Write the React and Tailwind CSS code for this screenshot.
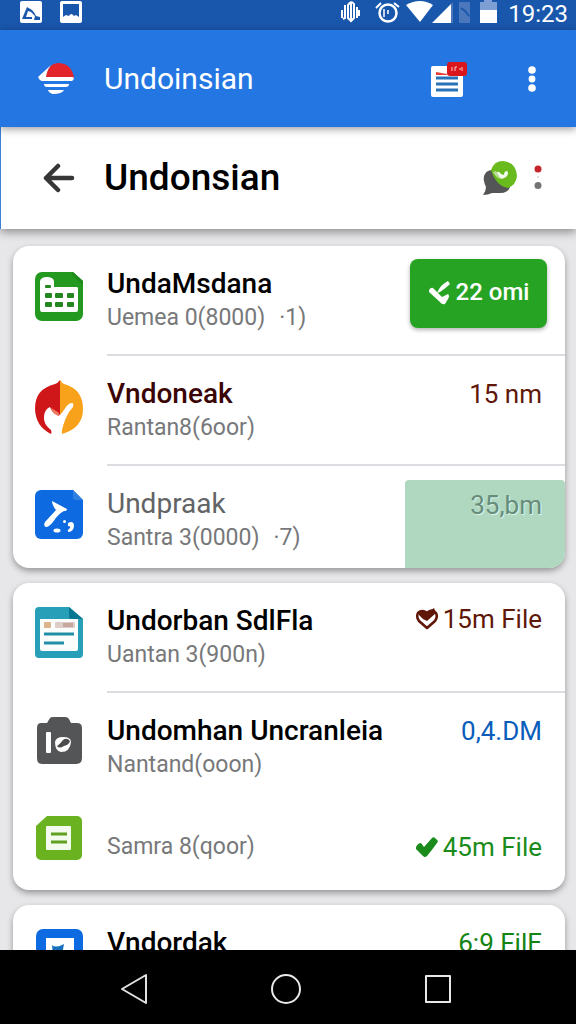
import React from 'react';

const icons = {
  building: (
    <svg viewBox="0 0 48 49" className="h-[49px] w-12" aria-hidden="true">
      <path d="M7 0H38L48 9V42a7 7 0 0 1-7 7H7a7 7 0 0 1-7-7V7a7 7 0 0 1 7-7Z" fill="#24991f" />
      <path d="M38 0L48 9V13L36 2Z" fill="#1d8a1b" />
      <path d="M5 37V9Q6 5 12 5Q18 5 19 9V15H42Q43 15 43 17V38Q43 40 41 40H7Q5 40 5 37Z" fill="#fff" />
      <g fill="#24861f">
        <rect x="10" y="13" width="6" height="3" rx="1" />
        <rect x="10" y="21" width="7" height="5" rx="1" />
        <rect x="20" y="21" width="8" height="5" rx="1" />
        <rect x="32" y="21" width="7" height="5" rx="1" />
        <rect x="10" y="30" width="7" height="5" rx="1" />
        <rect x="20" y="30" width="8" height="5" rx="1" />
        <rect x="32" y="30" width="7" height="5" rx="1" />
      </g>
    </svg>
  ),
  flame: (
    <svg viewBox="0 0 48 54" className="h-[54px] w-12" aria-hidden="true">
      <path d="M25 0V34L16 54Q0 46 0 28Q0 9 20 4Q23 3 25 0Z" fill="#cf1719" />
      <path d="M25 0Q27 3 29 4Q48 9 48 29Q48 48 27 54L25 34Z" fill="#f8a21b" />
      <path d="M16 50Q8 44 9 36Q10 29 15 27Q17 33 24 36Q28 32 31 27Q34 23 37 23Q39 23 38 27Q30 35 26 54L17 54Z" fill="#fff" />
      <path d="M16 28Q20 30 24 33V36Q17 34 16 28Z" fill="#ed7960" />
    </svg>
  ),
  blueDoc: (
    <svg viewBox="0 0 48 49" className="h-[49px] w-12" aria-hidden="true">
      <path d="M6 0H38L48 10V43a6 6 0 0 1-6 6H6a6 6 0 0 1-6-6V6a6 6 0 0 1 6-6Z" fill="#0e6ae0" />
      <path d="M38 0L48 10H40Q38 10 38 8Z" fill="#3180df" />
      <path d="M17 11L32 19Q32 21 29 21Q23 24 18 32Q14 37 11 37Q8 36 10 32L21 20Q17 15 17 11Z" fill="#fff" />
      <ellipse cx="22" cy="40.5" rx="3.5" ry="2" fill="#fff" />
      <circle cx="29.5" cy="31.5" r="1.5" fill="#fff" />
      <path d="M33 33Q38 30 39 35Q39 41 34 42Q31 41 35 38Q36 36 33 36Z" fill="#fff" />
    </svg>
  ),
  tealDoc: (
    <svg viewBox="0 0 48 51" className="h-[51px] w-12" aria-hidden="true">
      <path d="M4 0H34L48 12V47a4 4 0 0 1-4 4H4a4 4 0 0 1-4-4V4a4 4 0 0 1 4-4Z" fill="#289fb8" />
      <path d="M34 0L48 12H36Q34 12 34 10Z" fill="#087791" />
      <path d="M5 12H43V42Q43 44 41 44H7Q5 44 5 42Z" fill="#fbfdfc" />
      <rect x="9" y="15" width="7" height="6" rx="1" fill="#dcb48c" />
      <rect x="20" y="15" width="20" height="6" rx="1" fill="#dccdc8" />
      <path d="M28 16H38V20H28Z" fill="#c6a79e" />
      <path d="M9 27H39M9 36H29" stroke="#238fa6" strokeWidth="3" />
    </svg>
  ),
  camera: (
    <svg viewBox="0 0 48 49" className="h-[49px] w-12" aria-hidden="true">
      <path d="M6 8H12L15 3Q16 2 18 2H30Q33 2 34 4L36 8H42Q47 8 47 13V43Q47 49 41 49H7Q2 49 2 43V13Q2 8 6 8Z" fill="#545557" />
      <rect x="11" y="17" width="5" height="21" rx="1" fill="#fff" />
      <path d="M20 27Q21 22 28 22Q36 22 36 27Q35 37 26 37Q20 36 20 27Z" fill="#fff" />
      <path d="M22 31Q24 30 28 25Q32 22 35 26Q34 30 29 31Q24 34 22 31Z" fill="#4b4b4d" />
    </svg>
  ),
  note: (
    <svg viewBox="0 0 48 46" className="h-[46px] w-12" aria-hidden="true">
      <path d="M12 1H42a5 5 0 0 1 5 5V40a5 5 0 0 1-5 5H6a5 5 0 0 1-5-5V11Z" fill="#6ab220" />
      <rect x="11" y="11" width="25" height="24" rx="1" fill="#f4faee" />
      <path d="M16 19H32M16 27H32" stroke="#5fa01e" strokeWidth="3" />
    </svg>
  ),
  frame: (
    <svg viewBox="0 0 48 49" className="h-[49px] w-12" aria-hidden="true">
      <rect x="1" width="47" height="49" rx="7" fill="#0e6ae0" />
      <rect x="11" y="9" width="28" height="30" fill="#fff" />
      <path d="M17 16Q20 19 27 16L29 15L27 26H18Z" fill="#1670bd" />
    </svg>
  ),
};

function Check() {
  return (
    <svg viewBox="0 0 24 22" className="h-[22px] w-6" fill="currentColor" aria-hidden="true">
      <path d="M1 11Q3 7 6 7L9 11L17 2Q19 0 21 3Q24 5 22 7Q17 14 12 20Q10 22 8 20L1 13Z" />
    </svg>
  );
}

function Heart() {
  return (
    <svg viewBox="0 0 24 24" className="h-6 w-6" aria-hidden="true">
      <path
        d="M12 21L4 14Q1 10 3 6Q7 2 12 6Q17 1 21 6Q23 10 20 14Z"
        fill="none"
        stroke="#5f1708"
        strokeWidth="2.6"
        strokeLinejoin="round"
      />
      <path d="M4 5Q8 2 12 6L19 1L21 6L12 14Q7 12 4 8Z" fill="#5f1708" />
    </svg>
  );
}

function Row({ icon, iconClass = 'pt-6', title, titleClass = 'font-medium text-black', sub, extra, line, bodyClass = 'pt-5 pb-5', children }) {
  return (
    <li className="flex gap-6 pl-[22px]">
      <div className={`shrink-0 ${iconClass}`}>{icons[icon]}</div>
      <div className={`flex min-w-0 flex-1 justify-between ${line ? 'border-b-2 border-[#dcdde0]' : ''}`}>
        <div className={`whitespace-nowrap ${bodyClass}`}>
          {title && <h2 className={`text-[28px] leading-9 ${titleClass}`}>{title}</h2>}
          {sub && (
            <p className="flex gap-[14px] text-[23px] leading-8 text-[#77787a]">
              <span>{sub}</span>
              {extra && <span>{extra}</span>}
            </p>
          )}
        </div>
        {children}
      </div>
    </li>
  );
}

function Value({ className, children }) {
  return (
    <div className={`flex h-9 items-center gap-1 whitespace-nowrap pr-[23px] text-[26px] ${className}`}>
      {children}
    </div>
  );
}

function Card({ children }) {
  return (
    <ul className="shrink-0 overflow-hidden rounded-2xl bg-white shadow-[0_3px_6px_rgba(0,0,0,0.35)]">
      {children}
    </ul>
  );
}

function StatusBar() {
  return (
    <div className="flex h-[30px] shrink-0 items-start justify-between bg-[#1957ad] pl-5 pr-2 text-white">
      <div className="flex gap-[18px] pt-px">
        <svg viewBox="0 0 22 22" className="h-[22px] w-[22px]" aria-hidden="true">
          <rect width="22" height="22" rx="2" fill="#fff" />
          <path d="M2 18L7 6L12 9Q15 12 16 15L20 16V19H14L15 15L11 11L8 10L6 16H12V18Z" fill="#1957ad" />
        </svg>
        <svg viewBox="0 0 22 22" className="h-[22px] w-[22px]" aria-hidden="true">
          <rect width="22" height="22" rx="2" fill="#fff" />
          <path d="M3 3H19V16L16 14L14 15Q11 11 9 15L6 14L3 16Z" fill="#1957ad" />
        </svg>
      </div>
      <div className="flex items-start gap-[10px]">
        <svg viewBox="0 0 20 24" className="mr-1 h-6 w-5" fill="none" stroke="#fff" strokeWidth="2" aria-hidden="true">
          <path d="M2 10V18M5 5V18L3 19M8 18V5Q11 0 14 4V18L11 21ZM11 3V20M17 7V18M19 10V16" />
        </svg>
        <svg viewBox="0 0 26 24" className="h-6 w-[26px]" fill="none" stroke="#fff" strokeWidth="2.5" aria-hidden="true">
          <circle cx="14" cy="13" r="8.5" />
          <path d="M2 8L7 3M20 3L25 7" strokeWidth="2" />
          <path d="M10 9V17M14 10V14" strokeWidth="1.5" />
        </svg>
        <svg viewBox="0 0 92 24" className="-ml-1 h-6 w-[92px]" aria-hidden="true">
          <path d="M0 5Q14-3 27 5L14 22Z" fill="#fff" />
          <path d="M26 23L45 4V23Z" fill="#fff" />
          <path d="M45 4L47 2V23H45ZM53 2H64V23H53Z" fill="#4b78bd" />
          <path d="M55 8L59 11L63 16" stroke="#1957ad" strokeWidth="2" fill="none" />
          <path d="M74 2H78V0H86V2H91V10H74Z" fill="#7e9fd3" />
          <path d="M74 10H91V23H74Z" fill="#fff" />
        </svg>
        <span className="text-2xl leading-7">19:23</span>
      </div>
    </div>
  );
}

export default function App() {
  return (
    <div className="flex h-screen flex-col overflow-hidden bg-[#e7e7e9] font-['Roboto',sans-serif]">
      <StatusBar />
      <header className="relative z-20 flex h-[97px] shrink-0 items-center bg-[#2477e2] pl-[37px] pr-[39px] text-white shadow-[0_2px_8px_rgba(0,0,0,0.4)]">
        <svg viewBox="0 0 38 34" className="h-[34px] w-[38px]" aria-hidden="true">
          <path d="M8 16Q11 1 22 1Q35 2 37 16Z" fill="#e3252b" />
          <path d="M1 15L14 3Q10 8 9 15H36Q38 17 35 19H5Q2 18 1 15Z" fill="#fff" />
          <path d="M7 22H32Q32 25 29 25H10Q7 25 7 22ZM11 28H27Q25 32 16 32Q12 31 11 28Z" fill="#fff" />
        </svg>
        <p className="ml-[29px] flex-1 text-[30px] leading-10">Undoinsian</p>
        <button type="button" aria-label="News" className="mr-[60px]">
          <svg viewBox="0 0 36 36" className="h-9 w-9" aria-hidden="true">
            <rect y="5" width="32" height="31" rx="2" fill="#fff" />
            <path d="M5 17H27M5 23H27M5 29H27" stroke="#2873b8" strokeWidth="3" />
            <path d="M5 11L16 13V14H5Z" fill="#e4402f" />
            <rect x="16" y="1" width="20" height="14" rx="3" fill="#d9161c" />
            <path d="M21 6V10M24 6V10M24 6H26M28 8H30M31 6V10" stroke="#ffc9c9" strokeWidth="1" fill="none" />
          </svg>
        </button>
        <button type="button" aria-label="More options">
          <svg viewBox="0 0 10 28" className="h-7 w-[10px]" fill="#fff" aria-hidden="true">
            <circle cx="5" cy="5" r="3.8" />
            <circle cx="5" cy="14" r="3.4" />
            <circle cx="5" cy="23" r="3.8" />
          </svg>
        </button>
      </header>
      <div className="relative z-10 flex h-[102px] shrink-0 items-center border-l border-[#3b82d6] bg-white pl-[42px] pr-[33px] shadow-[0_3px_9px_rgba(0,0,0,0.4)]">
        <button type="button" aria-label="Back">
          <svg viewBox="0 0 32 30" className="h-[30px] w-8" fill="none" stroke="#363636" strokeWidth="4.5" strokeLinecap="round" strokeLinejoin="round" aria-hidden="true">
            <path d="M29 15H3M15 3L3 15L15 27" />
          </svg>
        </button>
        <h1 className="ml-[29px] flex-1 text-[37px] font-medium leading-[44px] text-black">Undonsian</h1>
        <button type="button" aria-label="Chat" className="mr-4">
          <svg viewBox="0 0 34 36" className="h-9 w-[34px]" aria-hidden="true">
            <path d="M1 16Q3 10 9 10L27 27Q25 33 17 33Q11 33 9 33Q5 35 0 35Q3 31 3 27Q0 21 1 16Z" fill="#545557" />
            <path d="M8 10Q11 1 20 1Q33 2 34 16Q33 25 25 28Q13 26 8 10Z" fill="#68ba1d" />
            <path d="M14 12Q16 11 18 14L21 15Q21 11 24 11Q26 13 24 16Q20 20 17 18Q14 16 14 12Z" fill="#f4faee" />
            <path d="M10 12Q14 19 18 19L13 11Z" fill="#b8dc98" />
          </svg>
        </button>
        <button type="button" aria-label="Item options">
          <svg viewBox="0 0 10 28" className="h-7 w-[10px]" aria-hidden="true">
            <circle cx="5" cy="5" r="3.5" fill="#c4242a" />
            <circle cx="5" cy="13" r="1" fill="#d5d5d5" />
            <circle cx="5" cy="21.5" r="3.5" fill="#747474" />
          </svg>
        </button>
      </div>
      <main className="flex min-h-0 flex-1 flex-col gap-[15px] overflow-hidden pl-[13px] pr-[11px] pt-[17px]">
        <Card>
          <Row icon="building" iconClass="pt-[26px]" title="UndaMsdana" sub="Uemea 0(8000)" extra="·1)" line>
            <button type="button" className="mr-[18px] mt-[13px] flex h-[69px] w-[137px] items-center justify-center gap-[5px] rounded-lg bg-[#27a323] pb-[3px] text-2xl font-medium text-white shadow-[0_2px_4px_rgba(0,0,0,0.3)]">
              <svg viewBox="0 0 23 26" className="h-[26px] w-[23px]" fill="currentColor" aria-hidden="true">
                <path d="M1 11Q3 8 5 9L14 18L20 15Q22 17 20 20L17 25Q14 26 12 23L1 13Z" />
                <path d="M9 14Q12 6 20 2L22 5Q18 9 12 13Z" />
              </svg>
              22 omi
            </button>
          </Row>
          <Row icon="flame" title="Vndoneak" titleClass="font-medium text-[#3a0605]" sub="Rantan8(6oor)" line>
            <Value className="mt-5 text-[#5f1708]">15 nm</Value>
          </Row>
          <Row icon="blueDoc" title="Undpraak" titleClass="text-[#626365]" sub="Santra 3(0000)" extra="·7)" bodyClass="pt-5 pb-[14px]">
            <div className="mt-[14px] flex w-40 justify-end rounded-t bg-[#b0d8c0]">
              <Value className="mt-[7px] text-[#668c7b] [text-shadow:1px_1px_1px_#e0f5e9]">35,bm</Value>
            </div>
          </Row>
        </Card>
        <Card>
          <Row icon="tealDoc" title="Undorban SdlFla" sub="Uantan 3(900n)" line>
            <Value className="mt-[18px] text-[#5f1708]">
              <Heart />
              15m File
            </Value>
          </Row>
          <Row icon="camera" iconClass="pt-[22px]" title="Undomhan Uncranleia" sub="Nantand(ooon)">
            <Value className="mt-5 text-[#0a5dbb]">0,4.DM</Value>
          </Row>
          <Row icon="note" iconClass="pt-[14px]" sub="Samra 8(qoor)" bodyClass="pt-[30px] pb-[27px]">
            <Value className="mt-7 text-[#1b8c1b]">
              <Check />
              45m File
            </Value>
          </Row>
        </Card>
        <Card>
          <Row icon="frame" title="Vndordak">
            <Value className="mt-5 text-[#138414]">6:9 FilE</Value>
          </Row>
        </Card>
      </main>
      <nav className="relative z-10 flex h-[74px] shrink-0 items-center justify-center bg-black pb-1 pr-1 pt-2">
        <button type="button" aria-label="Back" className="flex w-[152px] justify-center">
          <svg viewBox="0 0 30 32" className="h-8 w-[30px]" fill="none" stroke="#e2e2e0" strokeWidth="2" strokeLinejoin="round" aria-hidden="true">
            <path d="M3 16L27 2V30Z" />
          </svg>
        </button>
        <button type="button" aria-label="Home" className="flex w-[152px] justify-center">
          <svg viewBox="0 0 32 32" className="h-8 w-8" fill="none" stroke="#e8e8e6" strokeWidth="2" aria-hidden="true">
            <circle cx="16" cy="16" r="14" />
          </svg>
        </button>
        <button type="button" aria-label="Recent apps" className="flex w-[152px] justify-center">
          <svg viewBox="0 0 28 28" className="h-7 w-7" fill="none" stroke="#e8e8e6" strokeWidth="2" strokeLinejoin="round" aria-hidden="true">
            <rect x="2" y="1" width="24" height="26" />
          </svg>
        </button>
      </nav>
    </div>
  );
}
